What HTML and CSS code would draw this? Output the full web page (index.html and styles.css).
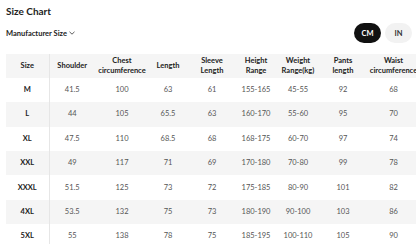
FILE: index.html
```html
<!DOCTYPE html>
<html lang="en">
<head>
  <meta charset="UTF-8" />
  <title>Size Chart</title>
  <link rel="stylesheet" href="styles.css">
</head>
<body>

<div class="page">
  <h1 class="title">Size Chart</h1>

  <div class="toolbar">
    <button class="size-select">Manufacturer Size
      <svg width="6" height="4" viewBox="0 0 6 4"><path d="M0.5 0.8 L3 3.2 L5.5 0.8" fill="none" stroke="#333" stroke-width="0.8"/></svg>
    </button>
    <div class="units">
      <button class="unit active">CM</button>
      <button class="unit">IN</button>
    </div>
  </div>

  <div class="table-wrap">
    <table class="chart">
      <colgroup>
        <col class="c-size"><col class="c-shoulder"><col class="c-chest"><col class="c-length"><col class="c-sleeve">
        <col class="c-height"><col class="c-weight"><col class="c-pants"><col class="c-waist">
      </colgroup>
      <thead>
        <tr>
          <th class="size">Size</th>
          <th>Shoulder</th>
          <th>Chest circumference</th>
          <th>Length</th>
          <th>Sleeve Length</th>
          <th>Height Range</th>
          <th>Weight Range(kg)</th>
          <th>Pants length</th>
          <th>Waist circumference</th>
        </tr>
      </thead>
      <tbody>
        <tr><th class="size">M</th><td>41.5</td><td>100</td><td>63</td><td>61</td><td>155-165</td><td>45-55</td><td>92</td><td>68</td></tr>
        <tr><th class="size">L</th><td>44</td><td>105</td><td>65.5</td><td>63</td><td>160-170</td><td>55-60</td><td>95</td><td>70</td></tr>
        <tr><th class="size">XL</th><td>47.5</td><td>110</td><td>68.5</td><td>68</td><td>168-175</td><td>60-70</td><td>97</td><td>74</td></tr>
        <tr><th class="size">XXL</th><td>49</td><td>117</td><td>71</td><td>69</td><td>170-180</td><td>70-80</td><td>99</td><td>78</td></tr>
        <tr><th class="size">XXXL</th><td>51.5</td><td>125</td><td>73</td><td>72</td><td>175-185</td><td>80-90</td><td>101</td><td>82</td></tr>
        <tr><th class="size">4XL</th><td>53.5</td><td>132</td><td>75</td><td>73</td><td>180-190</td><td>90-100</td><td>103</td><td>86</td></tr>
        <tr><th class="size">5XL</th><td>55</td><td>138</td><td>78</td><td>75</td><td>185-195</td><td>100-110</td><td>105</td><td>90</td></tr>
      </tbody>
    </table>
  </div>
</div>

</body>
</html>
```

FILE: styles.css
```css
* { box-sizing: border-box; }
body {
  margin: 0;
  background: #fff;
  color: #222;
  font-family: Lato, "Open Sans", sans-serif;
  overflow: hidden;
}
.page {
  padding: 4px 0 0 6px;
}
.title {
  margin: 0;
  font-size: 10px;
  line-height: 14px;
  font-weight: 700;
}
.toolbar {
  display: flex;
  align-items: center;
  justify-content: space-between;
  height: 20px;
  margin-top: 5px;
  padding-right: 4px;
}
.size-select {
  display: flex;
  align-items: center;
  gap: 2px;
  padding: 0;
  border: none;
  background: none;
  font-family: inherit;
  font-size: 7.5px;
  font-weight: 700;
  color: #222;
}
.units {
  display: flex;
  gap: 4px;
}
.unit {
  width: 27px;
  height: 20px;
  border: none;
  border-radius: 10px;
  background: #f2f2f2;
  color: #333;
  font-family: inherit;
  font-size: 7.5px;
  font-weight: 700;
  padding: 0;
}
.unit.active {
  background: #111;
  color: #fff;
}
.table-wrap {
  margin-top: 10.5px;
  overflow: hidden;
}
.chart {
  border-collapse: collapse;
  table-layout: fixed;
  width: 416px;
}
.c-size { width: 43px; }
.c-shoulder { width: 46px; }
.c-chest { width: 54px; }
.c-length { width: 38px; }
.c-sleeve { width: 50px; }
.c-height { width: 38px; }
.c-weight { width: 46px; }
.c-pants { width: 44px; }
.c-waist { width: 57px; }
.chart tr {
  height: 24.4px;
}
.chart thead tr,
.chart tbody tr:nth-child(even) {
  background: #f5f5f5;
}
.chart th,
.chart td {
  padding: 0 3px;
  text-align: center;
  vertical-align: middle;
  font-size: 7.5px;
  line-height: 10px;
}
.chart thead th {
  font-weight: 700;
  color: #222;
}
.chart td {
  color: #555;
}
.chart th.size {
  font-weight: 700;
  color: #222;
  border-right: 1px solid #e6e6e6;
}
```
